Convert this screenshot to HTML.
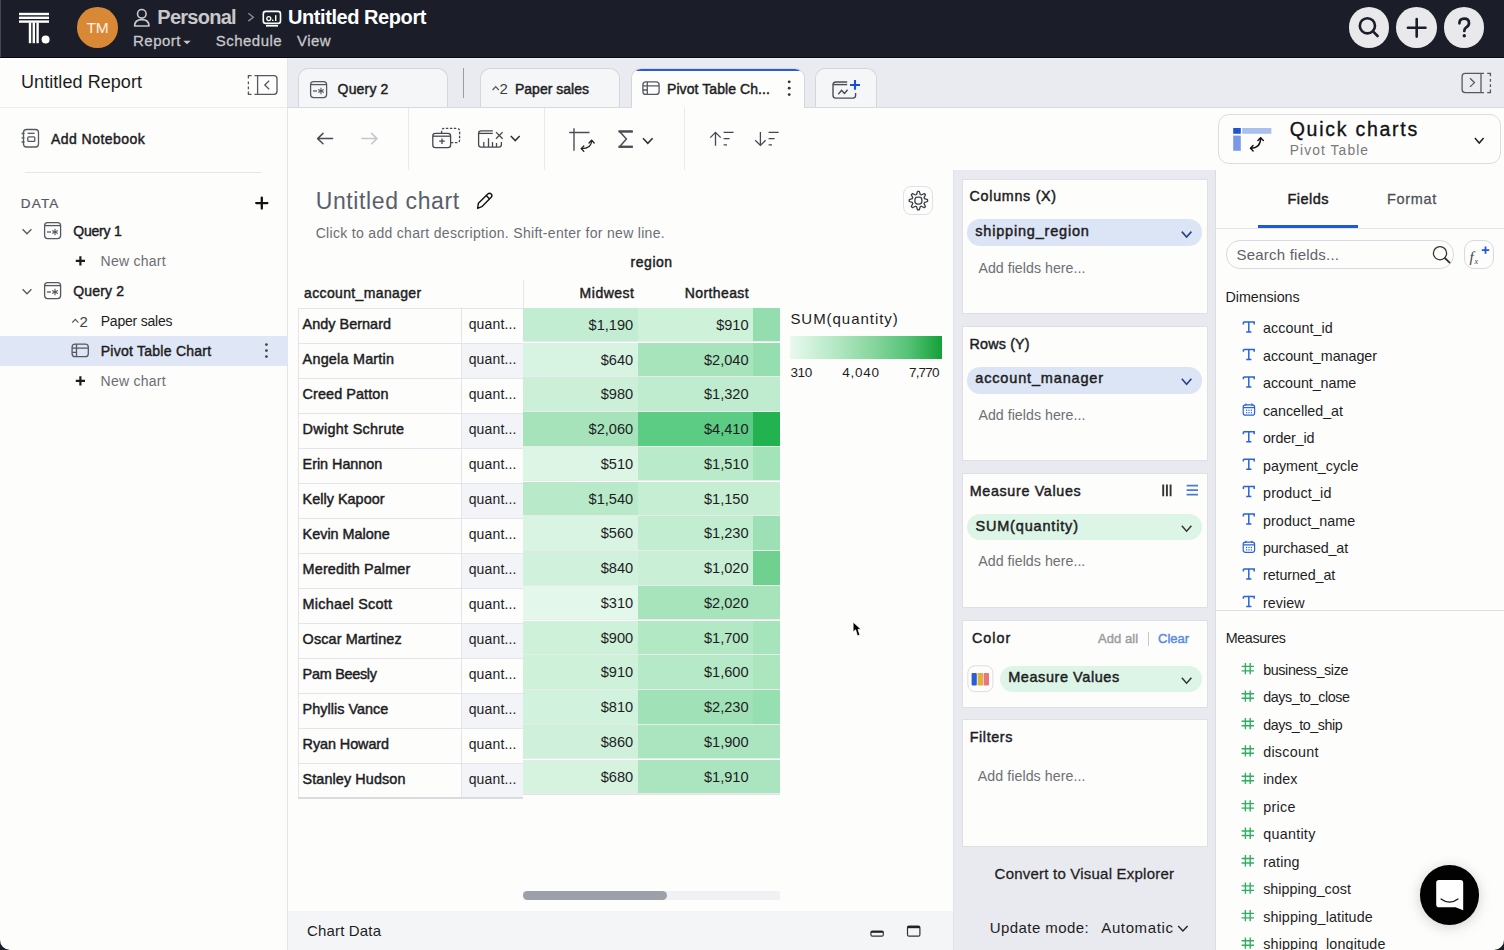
<!DOCTYPE html><html><head><meta charset="utf-8"><style>
*{box-sizing:border-box;margin:0;padding:0}
html,body{width:1504px;height:950px;overflow:hidden;background:#1b1e29}
body{font-family:"Liberation Sans",sans-serif;position:relative;color:#1d1d1f}
.a{position:absolute}
.t{position:absolute;white-space:nowrap;line-height:1}
svg{position:absolute;overflow:visible}
</style></head><body><div class="a" style="left:0;top:0;width:1504px;height:57px;background:#1b1e29"></div>
<svg style="left:0;top:0" width="60" height="57">
<g fill="#fff">
<rect x="19" y="12.8" width="30" height="2.4"/>
<rect x="19" y="16.6" width="30" height="2.4"/>
<rect x="19" y="20.4" width="30" height="2.4"/>
<rect x="28.8" y="22.5" width="2.4" height="20.7"/>
<rect x="32.6" y="22.5" width="2.4" height="20.7"/>
<rect x="36.4" y="22.5" width="2.4" height="20.7"/>
<circle cx="45.6" cy="39.4" r="4"/>
</g></svg>
<div class="a" style="left:77.3px;top:7.3px;width:40.6px;height:40.6px;border-radius:50%;background:#d98935"></div>
<div class="t" style="left:86.41px;top:20.38px;font-size:15.5px;font-weight:400;color:#fdf3e6;">TM</div>
<svg style="left:0;top:0" width="160" height="57"><g fill="none" stroke="#c9c9cb" stroke-width="1.6">
<circle cx="141.8" cy="13.8" r="4.3"/>
<path d="M134.6 26 Q134.6 19.6 141.8 19.6 Q149 19.6 149 26 Z" stroke-linejoin="round"/>
</g></svg>
<div class="t" style="left:157.30px;top:6.87px;font-size:20px;font-weight:700;color:#c9c9cb;letter-spacing:-0.740px;">Personal</div>
<svg style="left:0;top:0" width="300" height="57"><path d="M248.3 13.3 L253.3 17.2 L248.3 21.1" fill="none" stroke="#8a8c92" stroke-width="1.4"/>
<g fill="none" stroke="#fff" stroke-width="1.6"><rect x="263.3" y="11.4" width="17.2" height="12" rx="2.5"/></g>
<rect x="266" y="25" width="12" height="1.6" fill="#fff"/>
<circle cx="268.8" cy="18.6" r="2" fill="none" stroke="#fff" stroke-width="1.3"/>
<rect x="272" y="19.6" width="1.4" height="1.4" fill="#fff"/><rect x="275" y="15.2" width="1.4" height="5.8" fill="#fff"/>
</svg>
<div class="t" style="left:288.00px;top:6.87px;font-size:20px;font-weight:700;color:#ffffff;letter-spacing:-0.431px;">Untitled Report</div>
<div class="t" style="left:133.00px;top:32.60px;font-size:15px;font-weight:400;color:#c9c9cb;-webkit-text-stroke:0.27px #c9c9cb;letter-spacing:0.496px;">Report</div>
<svg style="left:0;top:0" width="200" height="57"><path d="M183.3 40.8 L190.7 40.8 L187 44.2 Z" fill="#c9c9cb"/></svg>
<div class="t" style="left:215.70px;top:32.60px;font-size:15px;font-weight:400;color:#c9c9cb;-webkit-text-stroke:0.27px #c9c9cb;letter-spacing:0.493px;">Schedule</div>
<div class="t" style="left:297.00px;top:32.60px;font-size:15px;font-weight:400;color:#c9c9cb;-webkit-text-stroke:0.27px #c9c9cb;letter-spacing:0.453px;">View</div>
<div class="a" style="left:1348.9px;top:7.3px;width:40.6px;height:40.6px;border-radius:50%;background:#e9e9eb"></div>
<div class="a" style="left:1396.4px;top:7.3px;width:40.6px;height:40.6px;border-radius:50%;background:#e9e9eb"></div>
<div class="a" style="left:1443.9px;top:7.3px;width:40.6px;height:40.6px;border-radius:50%;background:#e9e9eb"></div>
<svg style="left:0;top:0" width="1504" height="57"><g fill="none" stroke="#1b1e29" stroke-width="2.6" stroke-linecap="round">
<circle cx="1367.4" cy="25.8" r="7.6"/><path d="M1373 31.4 L1377.6 36"/>
<path d="M1416.7 19 V36.6 M1407.9 27.8 H1425.5"/>
</g>
<path d="M1459.4 23.3 Q1459.4 18.6 1464.2 18.6 Q1469 18.6 1469 23 Q1469 25.8 1466.2 27.4 Q1464.3 28.6 1464.3 31" fill="none" stroke="#1b1e29" stroke-width="2.7" stroke-linecap="round"/>
<circle cx="1464.3" cy="35.8" r="1.7" fill="#1b1e29"/>
</svg>
<div class="a" style="left:0;top:57px;width:288px;height:893px;background:#fdfdfc;border-right:1px solid #e4e5ea;border-bottom-left-radius:10px"></div>
<div class="t" style="left:21.00px;top:73.26px;font-size:18px;font-weight:400;color:#1d1d1f;letter-spacing:0.067px;">Untitled Report</div>
<svg style="left:0;top:0" width="288" height="200"><g fill="none" stroke="#55595f" stroke-width="1.3">
<path d="M254.5 75.6 H273.9 Q277 75.6 277 78.7 V91.3 Q277 94.4 273.9 94.4 H254.5"/><path d="M257.6 75.6 V94.4"/><path d="M251.6 75.6 H248.4 V78.6 M248.4 81.4 V84.2 M248.4 86.6 V89.2 M248.4 91.6 V94.4 H251.6"/><path d="M269.2 80.8 L264.8 85 L269.2 89.2"/>
</g>
<g fill="none" stroke="#55595f" stroke-width="1.3">
<rect x="23.5" y="129.5" width="15" height="17.5" rx="3"/>
<rect x="27.8" y="136.8" width="7" height="4.6" rx="1"/>
<path d="M27.6 133.3 H34.6"/>
<path d="M21.6 133.5 H24.5 M21.6 137.8 H24.5 M21.6 142 H24.5"/>
</g></svg>
<div class="a" style="left:0;top:107px;width:287px;height:1px;background:#ecedf1"></div>
<div class="t" style="left:51.00px;top:131.95px;font-size:14px;font-weight:400;color:#1d1d1f;-webkit-text-stroke:0.45px #1d1d1f;letter-spacing:0.452px;">Add Notebook</div>
<div class="a" style="left:25px;top:172px;width:237px;height:1px;background:#e4e6ee"></div>
<div class="t" style="left:20.80px;top:197.27px;font-size:13.5px;font-weight:400;color:#56595f;-webkit-text-stroke:0.24px #56595f;letter-spacing:1.167px;">DATA</div>
<svg style="left:0;top:0" width="288" height="400"><path d="M261.8 197.6 V208.6 M256.2 203.1 H267.4" stroke="#111" stroke-width="2.3" stroke-linecap="round"/></svg>
<div class="a" style="left:0;top:336px;width:287px;height:30px;background:#dfe7f6"></div>
<svg style="left:0;top:0" width="288" height="400"><path d="M22.6 229.2 L27.0 233.79999999999998 L31.400000000000002 229.2" fill="none" stroke="#55595f" stroke-width="1.3"/><path d="M22.6 289.2 L27.0 293.8 L31.400000000000002 289.2" fill="none" stroke="#55595f" stroke-width="1.3"/><g fill="none" stroke="#55595f" stroke-width="1.3"><rect x="44.6" y="222.6" width="16" height="16" rx="3"/>
<path d="M44.6 225.6 H60.6"/><path d="M47 232 H51"/>
<path d="M55 228.8 V235.2 M52.2 230.4 L57.8 233.6 M52.2 233.6 L57.8 230.4" stroke-width="1.1"/></g><g fill="none" stroke="#55595f" stroke-width="1.3"><rect x="44.6" y="282.6" width="16" height="16" rx="3"/>
<path d="M44.6 285.6 H60.6"/><path d="M47 292 H51"/>
<path d="M55 288.8 V295.2 M52.2 290.4 L57.8 293.6 M52.2 293.6 L57.8 290.4" stroke-width="1.1"/></g><path d="M80.4 256.3 V265.4 M75.8 260.9 H85" stroke="#1d1d1f" stroke-width="2.2"/><path d="M80.4 376.3 V385.4 M75.8 380.9 H85" stroke="#1d1d1f" stroke-width="2.2"/></svg>
<div class="t" style="left:73.20px;top:224.25px;font-size:14px;font-weight:400;color:#1d1d1f;-webkit-text-stroke:0.45px #1d1d1f;letter-spacing:-0.200px;">Query 1</div>
<div class="t" style="left:100.60px;top:253.95px;font-size:14px;font-weight:400;color:#6b6e75;letter-spacing:0.247px;">New chart</div>
<div class="t" style="left:73.20px;top:284.25px;font-size:14px;font-weight:400;color:#1d1d1f;-webkit-text-stroke:0.45px #1d1d1f;letter-spacing:0.167px;">Query 2</div>
<svg style="left:0;top:0" width="100" height="400"><path d="M72.2 322.6 L75.3 319.3 L78.4 322.6" fill="none" stroke="#555" stroke-width="1.2"/></svg>
<div class="t" style="left:79.40px;top:313.70px;font-size:15px;font-weight:400;color:#3d4046;">2</div>
<div class="t" style="left:100.70px;top:313.85px;font-size:14px;font-weight:400;color:#1d1d1f;letter-spacing:-0.213px;">Paper sales</div>
<svg style="left:0;top:0" width="288" height="400"><g fill="none" stroke="#55595f" stroke-width="1.3"><rect x="72.1" y="344.1" width="16.2" height="12.6" rx="3"/>
<path d="M72.1 348.1 H88.3 M76.5 344.1 V356.7 M72.1 352.3 H76.5"/></g><circle cx="266.4" cy="344.6" r="1.4" fill="#444"/><circle cx="266.4" cy="350.6" r="1.4" fill="#444"/><circle cx="266.4" cy="356.6" r="1.4" fill="#444"/></svg>
<div class="t" style="left:100.70px;top:343.85px;font-size:14px;font-weight:400;color:#1d1d1f;-webkit-text-stroke:0.45px #1d1d1f;letter-spacing:0.256px;">Pivot Table Chart</div>
<div class="t" style="left:100.60px;top:373.95px;font-size:14px;font-weight:400;color:#6b6e75;letter-spacing:0.247px;">New chart</div>
<div class="a" style="left:288px;top:57px;width:1216px;height:50px;background:#e9ebf0"></div>
<div class="a" style="left:288px;top:58px;width:1216px;height:1.3px;background:#f1f2f6"></div>
<div class="a" style="left:298px;top:68px;width:149.5px;height:40px;background:#f5f6f8;border:1px solid #d5d6dc;border-bottom:none;border-radius:10px 10px 0 0"></div>
<div class="a" style="left:479.5px;top:68px;width:140px;height:40px;background:#f5f6f8;border:1px solid #d5d6dc;border-bottom:none;border-radius:10px 10px 0 0"></div>
<div class="a" style="left:815px;top:68px;width:61.5px;height:40px;background:#f5f6f8;border:1px solid #d5d6dc;border-bottom:none;border-radius:10px 10px 0 0"></div>
<div class="a" style="left:288px;top:107px;width:1216px;height:1px;background:#d9dadf"></div>
<div class="a" style="left:631px;top:68px;width:174px;height:41px;background:#fdfdfc;border:1px solid #d5d6dc;border-bottom:none;border-radius:10px 10px 0 0;overflow:hidden"><div style="position:absolute;left:4px;right:4px;top:-1px;height:2.5px;background:#2d5bd3;border-radius:2px"></div></div>
<div class="a" style="left:462.5px;top:68px;width:1.4px;height:30px;background:#9a9ca3"></div>
<svg style="left:0;top:0" width="1504" height="120"><g fill="none" stroke="#55595f" stroke-width="1.3"><rect x="310.6" y="81.6" width="16" height="16" rx="3"/>
<path d="M310.6 84.6 H326.6"/><path d="M313 91 H317"/>
<path d="M321 87.8 V94.2 M318.2 89.4 L323.8 92.6 M318.2 92.6 L323.8 89.4" stroke-width="1.1"/></g><g fill="none" stroke="#55595f" stroke-width="1.3"><rect x="642.9" y="81.8" width="16.2" height="12.6" rx="3"/>
<path d="M642.9 85.8 H659.0999999999999 M647.3 81.8 V94.4 M642.9 90.0 H647.3"/></g><circle cx="789.2" cy="81.8" r="1.4" fill="#333"/><circle cx="789.2" cy="88.2" r="1.4" fill="#333"/><circle cx="789.2" cy="94.6" r="1.4" fill="#333"/><g fill="none" stroke="#4a4d53" stroke-width="1.4"><path d="M847.2 82 H836 Q833 82 833 85 V95.2 Q833 98.1 836 98.1 H852.7 Q855.6 98.1 855.6 95.2 V92.9"/><path d="M833.2 84.6 H847.2"/><path d="M838.3 94.3 L841.6 90.4 L844.5 93.4 L847.6 89.8"/></g><path d="M855 80 V89.8 M850 85 H860" stroke="#1b4fd9" stroke-width="2.1"/><g fill="none" stroke="#55595f" stroke-width="1.3"><path d="M1484 73.3 H1465.2 Q1462.1 73.3 1462.1 76.4 V89.6 Q1462.1 92.7 1465.2 92.7 H1484"/><path d="M1481 73.3 V92.7"/><path d="M1487.2 73.3 H1490.4 V76.3 M1490.4 79 V81.8 M1490.4 84.3 V86.9 M1490.4 89.6 V92.7 H1487.2"/><path d="M1470 78.3 L1474.4 82.6 L1470 86.9"/></g></svg>
<div class="t" style="left:337.60px;top:82.15px;font-size:14px;font-weight:400;color:#1d1d1f;-webkit-text-stroke:0.45px #1d1d1f;letter-spacing:0.167px;">Query 2</div>
<svg style="left:0;top:0" width="600" height="120"><path d="M492.6 90 L495.7 86.7 L498.8 90" fill="none" stroke="#555" stroke-width="1.2"/></svg>
<div class="t" style="left:499.60px;top:81.30px;font-size:15px;font-weight:400;color:#3d4046;">2</div>
<div class="t" style="left:515.00px;top:82.15px;font-size:14px;font-weight:400;color:#1d1d1f;-webkit-text-stroke:0.45px #1d1d1f;">Paper sales</div>
<div class="t" style="left:667.00px;top:81.75px;font-size:14px;font-weight:400;color:#1d1d1f;-webkit-text-stroke:0.45px #1d1d1f;letter-spacing:0.079px;">Pivot Table Ch...</div>
<div class="a" style="left:288px;top:108px;width:1216px;height:62px;background:#fdfdfc"></div>
<div class="a" style="left:288px;top:169.5px;width:1216px;height:1px;background:#e3e4e9"></div>
<div class="a" style="left:408.2px;top:108px;width:1px;height:62px;background:#e8e9ee"></div>
<div class="a" style="left:543.5px;top:108px;width:1px;height:62px;background:#e8e9ee"></div>
<div class="a" style="left:684px;top:108px;width:1px;height:62px;background:#e8e9ee"></div>
<svg style="left:0;top:0" width="1504" height="200"><g fill="none" stroke="#4a4d53" stroke-width="1.5" stroke-linecap="round" stroke-linejoin="round"><path d="M317.6 138.6 H332.6 M323 133.4 L317.6 138.6 L323 143.8"/></g><g fill="none" stroke="#c4c6cb" stroke-width="1.5" stroke-linecap="round" stroke-linejoin="round"><path d="M362 138.6 H377 M371.6 133.4 L377 138.6 L371.6 143.8"/></g><g fill="none" stroke="#45484e" stroke-width="1.3"><path d="M441.6 133.2 V131 Q441.6 128.4 444.2 128.4 H457 Q459.6 128.4 459.6 131 V140 Q459.6 142.6 457 142.6 H450.8" stroke-dasharray="2.4 1.6"/><rect x="432.8" y="133.3" width="17.8" height="14.3" rx="2.6"/><path d="M433 136.2 H450.6"/><path d="M442 138.4 V143.9 M439.2 141.1 H444.8"/></g><g fill="none" stroke="#45484e" stroke-width="1.3"><path d="M492.8 130.8 H481.2 Q478.6 130.8 478.6 133.4 V144.6 Q478.6 147.2 481.2 147.2 H498.8 Q501.4 147.2 501.4 144.6 V142"/><path d="M478.8 133.4 H492.8"/><path d="M483.8 147 V142 M488.5 147 V138.2 M492.5 147 V142 M496.5 147 V143"/><path d="M496 132.1 L502.6 138.7 M502.6 132.1 L496 138.7"/></g><path d="M510.8 136 L515.25 140.6 L519.7 136" fill="none" stroke="#333" stroke-width="1.5"/><g fill="none" stroke="#4a4d53" stroke-width="1.4"><path d="M569.2 132.5 H589.5 M574 128.2 V150.7"/></g><g fill="none" stroke="#222" stroke-width="1.3" stroke-linecap="round" stroke-linejoin="round"><path d="M581.3 148.6 Q591.6 148.6 591.6 140.4"/><path d="M583.8 146 L581.2 148.6 L583.8 151.2"/><path d="M589 143 L591.6 140.2 L594.2 143"/></g><path d="M632.6 131.6 H619.6 L626.4 139.1 L619.6 146.8 H632.6" fill="none" stroke="#4a4d53" stroke-width="1.5" stroke-linejoin="miter"/><rect x="618.6" y="130.3" width="14.2" height="2.3" fill="#4a4d53"/><rect x="618.6" y="145.6" width="14.2" height="2.3" fill="#4a4d53"/><path d="M643 138.2 L647.8 143.39999999999998 L652.6 138.2" fill="none" stroke="#333" stroke-width="1.6"/><g fill="none" stroke="#45484e" stroke-width="1.3">
<path d="M715.5 145.8 V132.4 M710.3 137.6 L715.5 132.4 L720.7 137.6"/>
<path d="M723.6 132.4 H733.6 M723.6 138.6 H729.6 M723.6 144.8 H727"/>
<path d="M760.4 132 V145.4 M755.2 140.2 L760.4 145.4 L765.6 140.2"/>
<path d="M768.6 132.4 H778.6 M768.6 138.6 H774.6 M768.6 144.8 H772"/>
</g></svg>
<div class="a" style="left:1218.3px;top:114.3px;width:282.4px;height:49.4px;border:1px solid #dcdde2;border-radius:11px;background:#fdfdfc"></div>
<svg style="left:0;top:0" width="1504" height="200"><rect x="1233.2" y="128" width="7.6" height="5.8" fill="#1e55d8"/><rect x="1242.2" y="128" width="29.2" height="5.8" fill="#a9c0ee"/><rect x="1233.2" y="135.6" width="7.6" height="15.2" fill="#7a9ae8"/><g fill="none" stroke="#111" stroke-width="1.4" stroke-linecap="round" stroke-linejoin="round"><path d="M1250.6 148.2 Q1260.6 148.2 1260.6 138"/><path d="M1253.1 145.5 L1250.5 148.2 L1253.1 150.9"/><path d="M1257.9 140.6 L1260.6 137.8 L1263.3 140.6"/></g><path d="M1474.9 137.9 L1479.25 143.1 L1483.6000000000001 137.9" fill="none" stroke="#222" stroke-width="1.5"/></svg>
<div class="t" style="left:1289.70px;top:120.19px;font-size:19.5px;font-weight:400;color:#111216;-webkit-text-stroke:0.35px #111216;letter-spacing:1.740px;">Quick charts</div>
<div class="t" style="left:1289.70px;top:143.62px;font-size:13.8px;font-weight:400;color:#77797e;letter-spacing:1.111px;">Pivot Table</div>
<div class="a" style="left:288px;top:170px;width:665px;height:780px;background:#fdfdfc"></div>
<div class="t" style="left:315.70px;top:189.53px;font-size:23px;font-weight:400;color:#59606c;letter-spacing:0.607px;">Untitled chart</div>
<div class="a" style="left:903.3px;top:185.9px;width:29.6px;height:29.6px;border:1px solid #dfe1e7;border-radius:8px"></div>
<svg style="left:0;top:0" width="1504" height="300"><g fill="none" stroke="#111" stroke-width="1.4" stroke-linejoin="round"><path d="M477.6 208.3 L478.4 203.3 L487.8 193.9 Q489.5 192.4 491.2 193.9 Q492.7 195.6 491.2 197.3 L481.8 206.7 Z"/><path d="M486.2 195.5 L489.6 198.9"/></g><path d="M917.50 191.44 L919.30 191.44 L920.26 194.48 L921.42 194.96 L924.24 193.49 L925.51 194.76 L924.04 197.58 L924.52 198.74 L927.56 199.70 L927.56 201.50 L924.52 202.46 L924.04 203.62 L925.51 206.44 L924.24 207.71 L921.42 206.24 L920.26 206.72 L919.30 209.76 L917.50 209.76 L916.54 206.72 L915.38 206.24 L912.56 207.71 L911.29 206.44 L912.76 203.62 L912.28 202.46 L909.24 201.50 L909.24 199.70 L912.28 198.74 L912.76 197.58 L911.29 194.76 L912.56 193.49 L915.38 194.96 L916.54 194.48Z" fill="none" stroke="#3c4046" stroke-width="1.3" stroke-linejoin="round"/><rect x="914.9" y="197.1" width="7" height="7" rx="2.8" fill="none" stroke="#3c4046" stroke-width="1.3"/></svg>
<div class="t" style="left:315.70px;top:226.15px;font-size:14px;font-weight:400;color:#6b6e74;letter-spacing:0.313px;">Click to add chart description. Shift-enter for new line.</div>
<div class="t" style="left:630.60px;top:254.95px;font-size:14px;font-weight:400;color:#1d1d1f;-webkit-text-stroke:0.45px #1d1d1f;letter-spacing:0.517px;">region</div>
<div class="t" style="left:304.10px;top:286.45px;font-size:14px;font-weight:400;color:#1d1d1f;-webkit-text-stroke:0.45px #1d1d1f;letter-spacing:0.352px;">account_manager</div>
<div class="t" style="left:579.60px;top:286.35px;font-size:14px;font-weight:400;color:#1d1d1f;-webkit-text-stroke:0.45px #1d1d1f;letter-spacing:0.509px;">Midwest</div>
<div class="t" style="left:684.80px;top:286.35px;font-size:14px;font-weight:400;color:#1d1d1f;-webkit-text-stroke:0.45px #1d1d1f;letter-spacing:0.388px;">Northeast</div>
<div class="a" style="left:522.5px;top:280px;width:1px;height:28px;background:#e6e7ec"></div>
<div class="a" style="left:298px;top:307.5px;width:163px;height:35px;border-left:1px solid #e4e5ea;border-top:1px solid #e4e5ea;background:#fdfdfc"></div>
<div class="a" style="left:460.5px;top:307.5px;width:62.5px;height:35px;border-left:1px solid #e4e5ea;border-top:1px solid #e4e5ea;background:#fdfdfc"></div>
<div class="a" style="left:523px;top:307.80px;width:115px;height:33.5px;background:#c3edd2"></div>
<div class="a" style="left:638px;top:307.80px;width:115px;height:33.5px;background:#cdf1d9"></div>
<div class="a" style="left:753px;top:307.80px;width:27px;height:33.5px;background:#93ddae"></div>
<div class="a" style="left:523px;top:341.30px;width:257px;height:1.2px;background:#e8eaeb"></div>
<div class="t" style="left:302.60px;top:316.71px;font-size:14.4px;font-weight:400;color:#1d1d1f;-webkit-text-stroke:0.46px #1d1d1f;letter-spacing:0.037px;">Andy Bernard</div>
<div class="t" style="left:468.70px;top:317.05px;font-size:14px;font-weight:400;color:#1d1d1f;letter-spacing:0.142px;">quant...</div>
<div class="t" style="left:588.56px;top:317.94px;font-size:14.6px;font-weight:400;color:#1d1d1f;">$1,190</div>
<div class="t" style="left:716.13px;top:317.94px;font-size:14.6px;font-weight:400;color:#1d1d1f;">$910</div>
<div class="a" style="left:298px;top:342.5px;width:163px;height:35px;border-left:1px solid #e4e5ea;border-top:1px solid #e4e5ea;background:#fdfdfc"></div>
<div class="a" style="left:460.5px;top:342.5px;width:62.5px;height:35px;border-left:1px solid #e4e5ea;border-top:1px solid #e4e5ea;background:#f3f4f7"></div>
<div class="a" style="left:523px;top:342.55px;width:115px;height:33.5px;background:#d7f3e1"></div>
<div class="a" style="left:638px;top:342.55px;width:115px;height:33.5px;background:#a7e4bb"></div>
<div class="a" style="left:753px;top:342.55px;width:27px;height:33.5px;background:#94deb0"></div>
<div class="a" style="left:523px;top:376.05px;width:257px;height:1.2px;background:#e8eaeb"></div>
<div class="t" style="left:302.60px;top:351.71px;font-size:14.4px;font-weight:400;color:#1d1d1f;-webkit-text-stroke:0.46px #1d1d1f;letter-spacing:0.218px;">Angela Martin</div>
<div class="t" style="left:468.70px;top:352.05px;font-size:14px;font-weight:400;color:#1d1d1f;letter-spacing:0.142px;">quant...</div>
<div class="t" style="left:600.73px;top:352.69px;font-size:14.6px;font-weight:400;color:#1d1d1f;">$640</div>
<div class="t" style="left:703.96px;top:352.69px;font-size:14.6px;font-weight:400;color:#1d1d1f;">$2,040</div>
<div class="a" style="left:298px;top:377.5px;width:163px;height:35px;border-left:1px solid #e4e5ea;border-top:1px solid #e4e5ea;background:#fdfdfc"></div>
<div class="a" style="left:460.5px;top:377.5px;width:62.5px;height:35px;border-left:1px solid #e4e5ea;border-top:1px solid #e4e5ea;background:#fdfdfc"></div>
<div class="a" style="left:523px;top:377.30px;width:115px;height:33.5px;background:#cbf0d7"></div>
<div class="a" style="left:638px;top:377.30px;width:115px;height:33.5px;background:#bfecce"></div>
<div class="a" style="left:753px;top:377.30px;width:27px;height:33.5px;background:#bfecce"></div>
<div class="a" style="left:523px;top:410.80px;width:257px;height:1.2px;background:#e8eaeb"></div>
<div class="t" style="left:302.60px;top:386.71px;font-size:14.4px;font-weight:400;color:#1d1d1f;-webkit-text-stroke:0.46px #1d1d1f;letter-spacing:0.091px;">Creed Patton</div>
<div class="t" style="left:468.70px;top:387.05px;font-size:14px;font-weight:400;color:#1d1d1f;letter-spacing:0.142px;">quant...</div>
<div class="t" style="left:600.73px;top:387.44px;font-size:14.6px;font-weight:400;color:#1d1d1f;">$980</div>
<div class="t" style="left:703.96px;top:387.44px;font-size:14.6px;font-weight:400;color:#1d1d1f;">$1,320</div>
<div class="a" style="left:298px;top:412.5px;width:163px;height:35px;border-left:1px solid #e4e5ea;border-top:1px solid #e4e5ea;background:#fdfdfc"></div>
<div class="a" style="left:460.5px;top:412.5px;width:62.5px;height:35px;border-left:1px solid #e4e5ea;border-top:1px solid #e4e5ea;background:#f3f4f7"></div>
<div class="a" style="left:523px;top:412.05px;width:115px;height:33.5px;background:#a6e3bb"></div>
<div class="a" style="left:638px;top:412.05px;width:115px;height:33.5px;background:#5ccb84"></div>
<div class="a" style="left:753px;top:412.05px;width:27px;height:33.5px;background:#22b24f"></div>
<div class="a" style="left:523px;top:445.55px;width:257px;height:1.2px;background:#e8eaeb"></div>
<div class="t" style="left:302.60px;top:421.71px;font-size:14.4px;font-weight:400;color:#1d1d1f;-webkit-text-stroke:0.46px #1d1d1f;letter-spacing:0.294px;">Dwight Schrute</div>
<div class="t" style="left:468.70px;top:422.05px;font-size:14px;font-weight:400;color:#1d1d1f;letter-spacing:0.142px;">quant...</div>
<div class="t" style="left:588.56px;top:422.19px;font-size:14.6px;font-weight:400;color:#1d1d1f;">$2,060</div>
<div class="t" style="left:703.96px;top:422.19px;font-size:14.6px;font-weight:400;color:#1d1d1f;">$4,410</div>
<div class="a" style="left:298px;top:447.5px;width:163px;height:35px;border-left:1px solid #e4e5ea;border-top:1px solid #e4e5ea;background:#fdfdfc"></div>
<div class="a" style="left:460.5px;top:447.5px;width:62.5px;height:35px;border-left:1px solid #e4e5ea;border-top:1px solid #e4e5ea;background:#fdfdfc"></div>
<div class="a" style="left:523px;top:446.80px;width:115px;height:33.5px;background:#dcf5e4"></div>
<div class="a" style="left:638px;top:446.80px;width:115px;height:33.5px;background:#b9eac9"></div>
<div class="a" style="left:753px;top:446.80px;width:27px;height:33.5px;background:#a2e3ba"></div>
<div class="a" style="left:523px;top:480.30px;width:257px;height:1.2px;background:#e8eaeb"></div>
<div class="t" style="left:302.60px;top:456.71px;font-size:14.4px;font-weight:400;color:#1d1d1f;-webkit-text-stroke:0.46px #1d1d1f;letter-spacing:-0.030px;">Erin Hannon</div>
<div class="t" style="left:468.70px;top:457.05px;font-size:14px;font-weight:400;color:#1d1d1f;letter-spacing:0.142px;">quant...</div>
<div class="t" style="left:600.73px;top:456.94px;font-size:14.6px;font-weight:400;color:#1d1d1f;">$510</div>
<div class="t" style="left:703.96px;top:456.94px;font-size:14.6px;font-weight:400;color:#1d1d1f;">$1,510</div>
<div class="a" style="left:298px;top:482.5px;width:163px;height:35px;border-left:1px solid #e4e5ea;border-top:1px solid #e4e5ea;background:#fdfdfc"></div>
<div class="a" style="left:460.5px;top:482.5px;width:62.5px;height:35px;border-left:1px solid #e4e5ea;border-top:1px solid #e4e5ea;background:#f3f4f7"></div>
<div class="a" style="left:523px;top:481.55px;width:115px;height:33.5px;background:#b8e9c8"></div>
<div class="a" style="left:638px;top:481.55px;width:115px;height:33.5px;background:#c5eed3"></div>
<div class="a" style="left:753px;top:481.55px;width:27px;height:33.5px;background:#c5eed3"></div>
<div class="a" style="left:523px;top:515.05px;width:257px;height:1.2px;background:#e8eaeb"></div>
<div class="t" style="left:302.60px;top:491.71px;font-size:14.4px;font-weight:400;color:#1d1d1f;-webkit-text-stroke:0.46px #1d1d1f;letter-spacing:0.028px;">Kelly Kapoor</div>
<div class="t" style="left:468.70px;top:492.05px;font-size:14px;font-weight:400;color:#1d1d1f;letter-spacing:0.142px;">quant...</div>
<div class="t" style="left:588.56px;top:491.69px;font-size:14.6px;font-weight:400;color:#1d1d1f;">$1,540</div>
<div class="t" style="left:703.96px;top:491.69px;font-size:14.6px;font-weight:400;color:#1d1d1f;">$1,150</div>
<div class="a" style="left:298px;top:517.5px;width:163px;height:35px;border-left:1px solid #e4e5ea;border-top:1px solid #e4e5ea;background:#fdfdfc"></div>
<div class="a" style="left:460.5px;top:517.5px;width:62.5px;height:35px;border-left:1px solid #e4e5ea;border-top:1px solid #e4e5ea;background:#fdfdfc"></div>
<div class="a" style="left:523px;top:516.30px;width:115px;height:33.5px;background:#daf4e3"></div>
<div class="a" style="left:638px;top:516.30px;width:115px;height:33.5px;background:#c2edd0"></div>
<div class="a" style="left:753px;top:516.30px;width:27px;height:33.5px;background:#9ee0b5"></div>
<div class="a" style="left:523px;top:549.80px;width:257px;height:1.2px;background:#e8eaeb"></div>
<div class="t" style="left:302.60px;top:526.71px;font-size:14.4px;font-weight:400;color:#1d1d1f;-webkit-text-stroke:0.46px #1d1d1f;">Kevin Malone</div>
<div class="t" style="left:468.70px;top:527.05px;font-size:14px;font-weight:400;color:#1d1d1f;letter-spacing:0.142px;">quant...</div>
<div class="t" style="left:600.73px;top:526.44px;font-size:14.6px;font-weight:400;color:#1d1d1f;">$560</div>
<div class="t" style="left:703.96px;top:526.44px;font-size:14.6px;font-weight:400;color:#1d1d1f;">$1,230</div>
<div class="a" style="left:298px;top:552.5px;width:163px;height:35px;border-left:1px solid #e4e5ea;border-top:1px solid #e4e5ea;background:#fdfdfc"></div>
<div class="a" style="left:460.5px;top:552.5px;width:62.5px;height:35px;border-left:1px solid #e4e5ea;border-top:1px solid #e4e5ea;background:#f3f4f7"></div>
<div class="a" style="left:523px;top:551.05px;width:115px;height:33.5px;background:#d0f1db"></div>
<div class="a" style="left:638px;top:551.05px;width:115px;height:33.5px;background:#c9efd6"></div>
<div class="a" style="left:753px;top:551.05px;width:27px;height:33.5px;background:#6fd090"></div>
<div class="a" style="left:523px;top:584.55px;width:257px;height:1.2px;background:#e8eaeb"></div>
<div class="t" style="left:302.60px;top:561.71px;font-size:14.4px;font-weight:400;color:#1d1d1f;-webkit-text-stroke:0.46px #1d1d1f;letter-spacing:0.152px;">Meredith Palmer</div>
<div class="t" style="left:468.70px;top:562.05px;font-size:14px;font-weight:400;color:#1d1d1f;letter-spacing:0.142px;">quant...</div>
<div class="t" style="left:600.73px;top:561.19px;font-size:14.6px;font-weight:400;color:#1d1d1f;">$840</div>
<div class="t" style="left:703.96px;top:561.19px;font-size:14.6px;font-weight:400;color:#1d1d1f;">$1,020</div>
<div class="a" style="left:298px;top:587.5px;width:163px;height:35px;border-left:1px solid #e4e5ea;border-top:1px solid #e4e5ea;background:#fdfdfc"></div>
<div class="a" style="left:460.5px;top:587.5px;width:62.5px;height:35px;border-left:1px solid #e4e5ea;border-top:1px solid #e4e5ea;background:#fdfdfc"></div>
<div class="a" style="left:523px;top:585.80px;width:115px;height:33.5px;background:#e3f7ea"></div>
<div class="a" style="left:638px;top:585.80px;width:115px;height:33.5px;background:#a7e4bc"></div>
<div class="a" style="left:753px;top:585.80px;width:27px;height:33.5px;background:#a7e4bc"></div>
<div class="a" style="left:523px;top:619.30px;width:257px;height:1.2px;background:#e8eaeb"></div>
<div class="t" style="left:302.60px;top:596.71px;font-size:14.4px;font-weight:400;color:#1d1d1f;-webkit-text-stroke:0.46px #1d1d1f;letter-spacing:0.260px;">Michael Scott</div>
<div class="t" style="left:468.70px;top:597.05px;font-size:14px;font-weight:400;color:#1d1d1f;letter-spacing:0.142px;">quant...</div>
<div class="t" style="left:600.73px;top:595.94px;font-size:14.6px;font-weight:400;color:#1d1d1f;">$310</div>
<div class="t" style="left:703.96px;top:595.94px;font-size:14.6px;font-weight:400;color:#1d1d1f;">$2,020</div>
<div class="a" style="left:298px;top:622.5px;width:163px;height:35px;border-left:1px solid #e4e5ea;border-top:1px solid #e4e5ea;background:#fdfdfc"></div>
<div class="a" style="left:460.5px;top:622.5px;width:62.5px;height:35px;border-left:1px solid #e4e5ea;border-top:1px solid #e4e5ea;background:#f3f4f7"></div>
<div class="a" style="left:523px;top:620.55px;width:115px;height:33.5px;background:#cef1d9"></div>
<div class="a" style="left:638px;top:620.55px;width:115px;height:33.5px;background:#b2e8c4"></div>
<div class="a" style="left:753px;top:620.55px;width:27px;height:33.5px;background:#a6e4bb"></div>
<div class="a" style="left:523px;top:654.05px;width:257px;height:1.2px;background:#e8eaeb"></div>
<div class="t" style="left:302.60px;top:631.71px;font-size:14.4px;font-weight:400;color:#1d1d1f;-webkit-text-stroke:0.46px #1d1d1f;letter-spacing:0.111px;">Oscar Martinez</div>
<div class="t" style="left:468.70px;top:632.05px;font-size:14px;font-weight:400;color:#1d1d1f;letter-spacing:0.142px;">quant...</div>
<div class="t" style="left:600.73px;top:630.69px;font-size:14.6px;font-weight:400;color:#1d1d1f;">$900</div>
<div class="t" style="left:703.96px;top:630.69px;font-size:14.6px;font-weight:400;color:#1d1d1f;">$1,700</div>
<div class="a" style="left:298px;top:657.5px;width:163px;height:35px;border-left:1px solid #e4e5ea;border-top:1px solid #e4e5ea;background:#fdfdfc"></div>
<div class="a" style="left:460.5px;top:657.5px;width:62.5px;height:35px;border-left:1px solid #e4e5ea;border-top:1px solid #e4e5ea;background:#fdfdfc"></div>
<div class="a" style="left:523px;top:655.30px;width:115px;height:33.5px;background:#cdf1d9"></div>
<div class="a" style="left:638px;top:655.30px;width:115px;height:33.5px;background:#b6e9c7"></div>
<div class="a" style="left:753px;top:655.30px;width:27px;height:33.5px;background:#abe6bf"></div>
<div class="a" style="left:523px;top:688.80px;width:257px;height:1.2px;background:#e8eaeb"></div>
<div class="t" style="left:302.60px;top:666.71px;font-size:14.4px;font-weight:400;color:#1d1d1f;-webkit-text-stroke:0.46px #1d1d1f;letter-spacing:-0.264px;">Pam Beesly</div>
<div class="t" style="left:468.70px;top:667.05px;font-size:14px;font-weight:400;color:#1d1d1f;letter-spacing:0.142px;">quant...</div>
<div class="t" style="left:600.73px;top:665.44px;font-size:14.6px;font-weight:400;color:#1d1d1f;">$910</div>
<div class="t" style="left:703.96px;top:665.44px;font-size:14.6px;font-weight:400;color:#1d1d1f;">$1,600</div>
<div class="a" style="left:298px;top:692.5px;width:163px;height:35px;border-left:1px solid #e4e5ea;border-top:1px solid #e4e5ea;background:#fdfdfc"></div>
<div class="a" style="left:460.5px;top:692.5px;width:62.5px;height:35px;border-left:1px solid #e4e5ea;border-top:1px solid #e4e5ea;background:#f3f4f7"></div>
<div class="a" style="left:523px;top:690.05px;width:115px;height:33.5px;background:#d1f2dc"></div>
<div class="a" style="left:638px;top:690.05px;width:115px;height:33.5px;background:#a0e1b7"></div>
<div class="a" style="left:753px;top:690.05px;width:27px;height:33.5px;background:#96dfb1"></div>
<div class="a" style="left:523px;top:723.55px;width:257px;height:1.2px;background:#e8eaeb"></div>
<div class="t" style="left:302.60px;top:701.71px;font-size:14.4px;font-weight:400;color:#1d1d1f;-webkit-text-stroke:0.46px #1d1d1f;letter-spacing:0.032px;">Phyllis Vance</div>
<div class="t" style="left:468.70px;top:702.05px;font-size:14px;font-weight:400;color:#1d1d1f;letter-spacing:0.142px;">quant...</div>
<div class="t" style="left:600.73px;top:700.19px;font-size:14.6px;font-weight:400;color:#1d1d1f;">$810</div>
<div class="t" style="left:703.96px;top:700.19px;font-size:14.6px;font-weight:400;color:#1d1d1f;">$2,230</div>
<div class="a" style="left:298px;top:727.5px;width:163px;height:35px;border-left:1px solid #e4e5ea;border-top:1px solid #e4e5ea;background:#fdfdfc"></div>
<div class="a" style="left:460.5px;top:727.5px;width:62.5px;height:35px;border-left:1px solid #e4e5ea;border-top:1px solid #e4e5ea;background:#fdfdfc"></div>
<div class="a" style="left:523px;top:724.80px;width:115px;height:33.5px;background:#cff1db"></div>
<div class="a" style="left:638px;top:724.80px;width:115px;height:33.5px;background:#abe5bf"></div>
<div class="a" style="left:753px;top:724.80px;width:27px;height:33.5px;background:#abe5bf"></div>
<div class="a" style="left:523px;top:758.30px;width:257px;height:1.2px;background:#e8eaeb"></div>
<div class="t" style="left:302.60px;top:736.71px;font-size:14.4px;font-weight:400;color:#1d1d1f;-webkit-text-stroke:0.46px #1d1d1f;letter-spacing:-0.068px;">Ryan Howard</div>
<div class="t" style="left:468.70px;top:737.05px;font-size:14px;font-weight:400;color:#1d1d1f;letter-spacing:0.142px;">quant...</div>
<div class="t" style="left:600.73px;top:734.94px;font-size:14.6px;font-weight:400;color:#1d1d1f;">$860</div>
<div class="t" style="left:703.96px;top:734.94px;font-size:14.6px;font-weight:400;color:#1d1d1f;">$1,900</div>
<div class="a" style="left:298px;top:762.5px;width:163px;height:35px;border-left:1px solid #e4e5ea;border-top:1px solid #e4e5ea;background:#fdfdfc"></div>
<div class="a" style="left:460.5px;top:762.5px;width:62.5px;height:35px;border-left:1px solid #e4e5ea;border-top:1px solid #e4e5ea;background:#f3f4f7"></div>
<div class="a" style="left:523px;top:759.55px;width:115px;height:35.0px;background:#d6f3e0"></div>
<div class="a" style="left:638px;top:759.55px;width:115px;height:35.0px;background:#abe5bf"></div>
<div class="a" style="left:753px;top:759.55px;width:27px;height:35.0px;background:#abe5bf"></div>
<div class="a" style="left:523px;top:793.05px;width:257px;height:1.2px;background:#e8eaeb"></div>
<div class="t" style="left:302.60px;top:771.71px;font-size:14.4px;font-weight:400;color:#1d1d1f;-webkit-text-stroke:0.46px #1d1d1f;letter-spacing:0.092px;">Stanley Hudson</div>
<div class="t" style="left:468.70px;top:772.05px;font-size:14px;font-weight:400;color:#1d1d1f;letter-spacing:0.142px;">quant...</div>
<div class="t" style="left:600.73px;top:769.69px;font-size:14.6px;font-weight:400;color:#1d1d1f;">$680</div>
<div class="t" style="left:703.96px;top:769.69px;font-size:14.6px;font-weight:400;color:#1d1d1f;">$1,910</div>
<div class="a" style="left:298px;top:797px;width:225px;height:2px;background:#dadbe0"></div>
<div class="a" style="left:523px;top:793.6px;width:257px;height:1.4px;background:#e2e3e6"></div>
<div class="t" style="left:790.40px;top:310.50px;font-size:15px;font-weight:400;color:#1d1d1f;letter-spacing:0.962px;">SUM(quantity)</div>
<div class="a" style="left:790.2px;top:335.6px;width:151.4px;height:23.7px;background:linear-gradient(90deg,#e9f9ee 0%,#b4e8c4 30%,#86d59d 55%,#55c277 78%,#14a037 100%)"></div>
<div class="t" style="left:790.40px;top:365.97px;font-size:13.5px;font-weight:400;color:#1d1d1f;letter-spacing:-0.362px;">310</div>
<div class="t" style="left:842.20px;top:365.97px;font-size:13.5px;font-weight:400;color:#1d1d1f;letter-spacing:0.729px;">4,040</div>
<div class="t" style="left:908.90px;top:365.97px;font-size:13.5px;font-weight:400;color:#1d1d1f;letter-spacing:-0.771px;">7,770</div>
<div class="a" style="left:522.6px;top:891px;width:257.8px;height:9.4px;background:#f1f1f3"></div>
<div class="a" style="left:522.6px;top:891px;width:144.4px;height:9.4px;background:#9ca1a8;border-radius:5px"></div>
<div class="a" style="left:288px;top:910.7px;width:665px;height:39.3px;background:#f4f5f7"></div>
<div class="t" style="left:307.00px;top:923.00px;font-size:15px;font-weight:400;color:#1d1d1f;letter-spacing:0.163px;">Chart Data</div>
<svg style="left:0;top:0" width="1504" height="950"><rect x="870.9" y="931.2" width="12.4" height="5" rx="1.5" fill="none" stroke="#333" stroke-width="1.2"/><rect x="870.9" y="931" width="12.4" height="1.8" fill="#222"/><rect x="907.5" y="926.2" width="12.4" height="10" rx="1.5" fill="none" stroke="#333" stroke-width="1.2"/><rect x="907.5" y="926" width="12.4" height="2.2" fill="#222"/></svg>
<svg style="left:0;top:0" width="1504" height="950"><path d="M853.1 622 L853.1 632 L855.6 629.8 L857.4 635.9 L859.9 635 L858 629.4 L860.9 629.2 Z" fill="#000" stroke="#fff" stroke-width="0.8"/></svg>
<div class="a" style="left:953px;top:170px;width:262px;height:780px;background:#e9eaef"></div>
<div class="a" style="left:953px;top:170px;width:1px;height:780px;background:#e1e2e8"></div>
<div class="a" style="left:961.6px;top:178.6px;width:246px;height:135.6px;background:#fdfdfc;border:1px solid #dfe0e5"></div>
<div class="a" style="left:961.6px;top:325.8px;width:246px;height:135.59999999999997px;background:#fdfdfc;border:1px solid #dfe0e5"></div>
<div class="a" style="left:961.6px;top:473px;width:246px;height:135.29999999999995px;background:#fdfdfc;border:1px solid #dfe0e5"></div>
<div class="a" style="left:961.6px;top:619.5px;width:246px;height:88.70000000000005px;background:#fdfdfc;border:1px solid #dfe0e5"></div>
<div class="a" style="left:961.6px;top:719.3px;width:246px;height:128.0px;background:#fdfdfc;border:1px solid #dfe0e5"></div>
<div class="a" style="left:967px;top:219.4px;width:235.20000000000005px;height:27.099999999999994px;background:#dce5f5;border-radius:13px"></div>
<div class="a" style="left:967px;top:366.6px;width:235.20000000000005px;height:27.099999999999966px;background:#dce5f5;border-radius:13px"></div>
<div class="a" style="left:967.1px;top:513.6px;width:235.10000000000002px;height:26.799999999999955px;background:#dcf5e6;border-radius:13px"></div>
<div class="a" style="left:1000px;top:665.7px;width:201.79999999999995px;height:26.399999999999977px;background:#dcf5e6;border-radius:13px"></div>
<div class="t" style="left:969.60px;top:189.49px;font-size:14.3px;font-weight:400;color:#1d1d1f;-webkit-text-stroke:0.46px #1d1d1f;letter-spacing:0.706px;">Columns (X)</div>
<div class="t" style="left:975.30px;top:224.02px;font-size:14.5px;font-weight:400;color:#1d1d1f;-webkit-text-stroke:0.46px #1d1d1f;letter-spacing:0.801px;">shipping_region</div>
<div class="t" style="left:978.40px;top:260.58px;font-size:14.2px;font-weight:400;color:#6e7075;letter-spacing:0.031px;">Add fields here...</div>
<div class="t" style="left:969.60px;top:336.69px;font-size:14.3px;font-weight:400;color:#1d1d1f;-webkit-text-stroke:0.46px #1d1d1f;letter-spacing:0.174px;">Rows (Y)</div>
<div class="t" style="left:975.30px;top:371.22px;font-size:14.5px;font-weight:400;color:#1d1d1f;-webkit-text-stroke:0.46px #1d1d1f;letter-spacing:0.837px;">account_manager</div>
<div class="t" style="left:978.40px;top:407.78px;font-size:14.2px;font-weight:400;color:#6e7075;letter-spacing:0.031px;">Add fields here...</div>
<div class="t" style="left:969.70px;top:483.89px;font-size:14.3px;font-weight:400;color:#1d1d1f;-webkit-text-stroke:0.46px #1d1d1f;letter-spacing:0.673px;">Measure Values</div>
<div class="t" style="left:975.40px;top:518.62px;font-size:14.5px;font-weight:400;color:#1d1d1f;-webkit-text-stroke:0.46px #1d1d1f;letter-spacing:0.828px;">SUM(quantity)</div>
<div class="t" style="left:978.30px;top:554.38px;font-size:14.2px;font-weight:400;color:#6e7075;letter-spacing:0.031px;">Add fields here...</div>
<div class="t" style="left:972.00px;top:630.69px;font-size:14.3px;font-weight:400;color:#1d1d1f;-webkit-text-stroke:0.46px #1d1d1f;letter-spacing:1.034px;">Color</div>
<div class="t" style="left:1098.10px;top:631.79px;font-size:13px;font-weight:400;color:#9a9ca1;-webkit-text-stroke:0.42px #9a9ca1;letter-spacing:0.042px;">Add all</div>
<div class="t" style="left:1158.10px;top:631.79px;font-size:13px;font-weight:400;color:#5a8ae0;-webkit-text-stroke:0.42px #5a8ae0;letter-spacing:-0.016px;">Clear</div>
<div class="a" style="left:1147.8px;top:631.6px;width:1px;height:14px;background:#c8c9ce"></div>
<div class="t" style="left:1008.20px;top:670.32px;font-size:14.5px;font-weight:400;color:#1d1d1f;-webkit-text-stroke:0.46px #1d1d1f;letter-spacing:0.561px;">Measure Values</div>
<div class="t" style="left:969.70px;top:730.09px;font-size:14.3px;font-weight:400;color:#1d1d1f;-webkit-text-stroke:0.46px #1d1d1f;letter-spacing:0.630px;">Filters</div>
<div class="t" style="left:977.70px;top:768.58px;font-size:14.2px;font-weight:400;color:#6e7075;letter-spacing:0.078px;">Add fields here...</div>
<div class="t" style="left:994.60px;top:865.70px;font-size:15px;font-weight:400;color:#1d1d1f;-webkit-text-stroke:0.27px #1d1d1f;letter-spacing:0.217px;">Convert to Visual Explorer</div>
<div class="t" style="left:989.70px;top:920.00px;font-size:15px;font-weight:400;color:#1d1d1f;letter-spacing:0.434px;">Update mode:</div>
<div class="t" style="left:1101.30px;top:920.00px;font-size:15px;font-weight:400;color:#1d1d1f;letter-spacing:0.613px;">Automatic</div>
<svg style="left:0;top:0" width="1504" height="950"><path d="M1181.8 231.6 L1186.6 237.0 L1191.3999999999999 231.6" fill="none" stroke="#2c3f8c" stroke-width="1.6"/><path d="M1181.8 378.8 L1186.6 384.2 L1191.3999999999999 378.8" fill="none" stroke="#2c3f8c" stroke-width="1.6"/><path d="M1181.8 525.8 L1186.6 531.1999999999999 L1191.3999999999999 525.8" fill="none" stroke="#333" stroke-width="1.5"/><path d="M1181.8 677.8 L1186.6 683.1999999999999 L1191.3999999999999 677.8" fill="none" stroke="#333" stroke-width="1.5"/><path d="M1178.2 926 L1182.9 931 L1187.6000000000001 926" fill="none" stroke="#222" stroke-width="1.4"/><path d="M1163.2 484.4 V496.2 M1166.9 484.4 V496.2 M1170.6 484.4 V496.2" stroke="#333" stroke-width="1.9"/><path d="M1186.6 485.6 H1198 M1186.6 490.1 H1198 M1186.6 494.6 H1198" stroke="#4a7bdc" stroke-width="1.7"/><rect x="967.9" y="665.8" width="25" height="25.8" rx="7" fill="#fdfdfc" stroke="#dcdde2" stroke-width="1"/><rect x="971.6" y="673" width="5.2" height="12.5" rx="1" fill="#2b5ed6"/><rect x="977.6" y="673" width="5.4" height="12.5" fill="#dfb23c"/><rect x="983.6" y="673" width="5.4" height="12.5" rx="1" fill="#e9767b"/></svg>
<div class="a" style="left:1214.5px;top:170px;width:289.5px;height:780px;background:#fdfdfc;border-left:1px solid #dcdde3;border-bottom-right-radius:10px"></div>
<div class="t" style="left:1287.60px;top:191.52px;font-size:14.5px;font-weight:400;color:#1d1d1f;-webkit-text-stroke:0.46px #1d1d1f;letter-spacing:0.424px;">Fields</div>
<div class="t" style="left:1387.00px;top:191.52px;font-size:14.5px;font-weight:400;color:#4d5056;-webkit-text-stroke:0.26px #4d5056;letter-spacing:0.696px;">Format</div>
<div class="a" style="left:1215px;top:228px;width:289px;height:1px;background:#e3e4e9"></div>
<div class="a" style="left:1257.7px;top:225.3px;width:99.9px;height:3px;background:#2158d6"></div>
<div class="a" style="left:1225.6px;top:239.8px;width:228.1px;height:29px;border:1px solid #d9dadf;border-radius:14px"></div>
<div class="a" style="left:1464.4px;top:239.8px;width:29.2px;height:29px;border:1px solid #d9dadf;border-radius:10px"></div>
<div class="t" style="left:1236.50px;top:246.90px;font-size:15px;font-weight:400;color:#5f6267;letter-spacing:0.219px;">Search fields...</div>
<div class="t" style="left:1225.60px;top:289.69px;font-size:14.3px;font-weight:400;color:#1d1d1f;letter-spacing:-0.077px;">Dimensions</div>
<div class="t" style="left:1225.70px;top:631.39px;font-size:14.3px;font-weight:400;color:#1d1d1f;letter-spacing:-0.353px;">Measures</div>
<div class="a" style="left:1215px;top:609.6px;width:289px;height:1.2px;background:#dfe0e5"></div>
<div class="t" style="left:1263.00px;top:321.49px;font-size:14.3px;font-weight:400;color:#1d1d1f;letter-spacing:0.061px;">account_id</div>
<div class="t" style="left:1263.00px;top:348.93px;font-size:14.3px;font-weight:400;color:#1d1d1f;letter-spacing:-0.032px;">account_manager</div>
<div class="t" style="left:1263.00px;top:376.37px;font-size:14.3px;font-weight:400;color:#1d1d1f;letter-spacing:-0.053px;">account_name</div>
<div class="t" style="left:1263.00px;top:403.81px;font-size:14.3px;font-weight:400;color:#1d1d1f;letter-spacing:-0.025px;">cancelled_at</div>
<div class="t" style="left:1263.00px;top:431.25px;font-size:14.3px;font-weight:400;color:#1d1d1f;letter-spacing:-0.151px;">order_id</div>
<div class="t" style="left:1263.00px;top:458.69px;font-size:14.3px;font-weight:400;color:#1d1d1f;">payment_cycle</div>
<div class="t" style="left:1263.00px;top:486.13px;font-size:14.3px;font-weight:400;color:#1d1d1f;letter-spacing:0.182px;">product_id</div>
<div class="t" style="left:1263.00px;top:513.57px;font-size:14.3px;font-weight:400;color:#1d1d1f;letter-spacing:0.073px;">product_name</div>
<div class="t" style="left:1263.00px;top:541.01px;font-size:14.3px;font-weight:400;color:#1d1d1f;letter-spacing:-0.140px;">purchased_at</div>
<div class="t" style="left:1263.00px;top:568.45px;font-size:14.3px;font-weight:400;color:#1d1d1f;letter-spacing:-0.082px;">returned_at</div>
<div class="t" style="left:1263.00px;top:595.89px;font-size:14.3px;font-weight:400;color:#1d1d1f;letter-spacing:0.037px;">review</div>
<div class="t" style="left:1263.20px;top:662.69px;font-size:14.3px;font-weight:400;color:#1d1d1f;letter-spacing:-0.384px;">business_size</div>
<div class="t" style="left:1263.20px;top:690.13px;font-size:14.3px;font-weight:400;color:#1d1d1f;letter-spacing:-0.383px;">days_to_close</div>
<div class="t" style="left:1263.20px;top:717.57px;font-size:14.3px;font-weight:400;color:#1d1d1f;letter-spacing:-0.432px;">days_to_ship</div>
<div class="t" style="left:1263.20px;top:745.01px;font-size:14.3px;font-weight:400;color:#1d1d1f;letter-spacing:0.279px;">discount</div>
<div class="t" style="left:1263.20px;top:772.45px;font-size:14.3px;font-weight:400;color:#1d1d1f;letter-spacing:-0.020px;">index</div>
<div class="t" style="left:1263.20px;top:799.89px;font-size:14.3px;font-weight:400;color:#1d1d1f;letter-spacing:0.303px;">price</div>
<div class="t" style="left:1263.20px;top:827.33px;font-size:14.3px;font-weight:400;color:#1d1d1f;letter-spacing:0.289px;">quantity</div>
<div class="t" style="left:1263.20px;top:854.77px;font-size:14.3px;font-weight:400;color:#1d1d1f;letter-spacing:0.107px;">rating</div>
<div class="t" style="left:1263.20px;top:882.21px;font-size:14.3px;font-weight:400;color:#1d1d1f;letter-spacing:0.023px;">shipping_cost</div>
<div class="t" style="left:1263.20px;top:909.65px;font-size:14.3px;font-weight:400;color:#1d1d1f;letter-spacing:0.137px;">shipping_latitude</div>
<div class="t" style="left:1263.20px;top:937.09px;font-size:14.3px;font-weight:400;color:#1d1d1f;letter-spacing:0.174px;">shipping_longitude</div>
<svg style="left:0;top:0" width="1504" height="950"><circle cx="1440" cy="253.2" r="6.6" fill="none" stroke="#333" stroke-width="1.3"/><path d="M1444.8 258 L1449.6 262.6" stroke="#333" stroke-width="1.8" stroke-linecap="round"/><text x="1469.5" y="262" font-family="Liberation Serif" font-style="italic" font-size="15" fill="#444">f</text><text x="1474.5" y="263.5" font-family="Liberation Serif" font-style="italic" font-size="8" fill="#444">x</text><path d="M1485.5 246.5 V253.8 M1481.8 250.2 H1489.2" stroke="#2158d6" stroke-width="1.8"/><path d="M1243.4 322.0 V324.4 M1243.4 322.0 H1254.2 V324.4 M1248.8 322.0 V332.0 M1246.2 332.0 H1251.4" fill="none" stroke="#2a63d8" stroke-width="1.5"/><path d="M1243.4 349.4 V351.8 M1243.4 349.4 H1254.2 V351.8 M1248.8 349.4 V359.4 M1246.2 359.4 H1251.4" fill="none" stroke="#2a63d8" stroke-width="1.5"/><path d="M1243.4 376.9 V379.3 M1243.4 376.9 H1254.2 V379.3 M1248.8 376.9 V386.9 M1246.2 386.9 H1251.4" fill="none" stroke="#2a63d8" stroke-width="1.5"/><rect x="1243.2" y="404.9" width="11.4" height="10.2" rx="2.2" fill="none" stroke="#2a63d8" stroke-width="1.2"/><path d="M1243.2 407.7 H1254.6 M1245.9 403.5 V405.7 M1251.9 403.5 V405.7" stroke="#2a63d8" stroke-width="1.2"/><g fill="#2a63d8"><rect x="1246" y="409.7" width="1.2" height="1.2"/><rect x="1248.4" y="409.7" width="1.2" height="1.2"/><rect x="1250.8" y="409.7" width="1.2" height="1.2"/><rect x="1246" y="412.1" width="1.2" height="1.2"/><rect x="1248.4" y="412.1" width="1.2" height="1.2"/><rect x="1250.8" y="412.1" width="1.2" height="1.2"/></g><path d="M1243.4 431.8 V434.2 M1243.4 431.8 H1254.2 V434.2 M1248.8 431.8 V441.8 M1246.2 441.8 H1251.4" fill="none" stroke="#2a63d8" stroke-width="1.5"/><path d="M1243.4 459.2 V461.6 M1243.4 459.2 H1254.2 V461.6 M1248.8 459.2 V469.2 M1246.2 469.2 H1251.4" fill="none" stroke="#2a63d8" stroke-width="1.5"/><path d="M1243.4 486.6 V489.0 M1243.4 486.6 H1254.2 V489.0 M1248.8 486.6 V496.6 M1246.2 496.6 H1251.4" fill="none" stroke="#2a63d8" stroke-width="1.5"/><path d="M1243.4 514.1 V516.5 M1243.4 514.1 H1254.2 V516.5 M1248.8 514.1 V524.1 M1246.2 524.1 H1251.4" fill="none" stroke="#2a63d8" stroke-width="1.5"/><rect x="1243.2" y="542.1" width="11.4" height="10.2" rx="2.2" fill="none" stroke="#2a63d8" stroke-width="1.2"/><path d="M1243.2 544.9 H1254.6 M1245.9 540.7 V542.9 M1251.9 540.7 V542.9" stroke="#2a63d8" stroke-width="1.2"/><g fill="#2a63d8"><rect x="1246" y="546.9" width="1.2" height="1.2"/><rect x="1248.4" y="546.9" width="1.2" height="1.2"/><rect x="1250.8" y="546.9" width="1.2" height="1.2"/><rect x="1246" y="549.3" width="1.2" height="1.2"/><rect x="1248.4" y="549.3" width="1.2" height="1.2"/><rect x="1250.8" y="549.3" width="1.2" height="1.2"/></g><path d="M1243.4 569.0 V571.4 M1243.4 569.0 H1254.2 V571.4 M1248.8 569.0 V579.0 M1246.2 579.0 H1251.4" fill="none" stroke="#2a63d8" stroke-width="1.5"/><path d="M1243.4 596.4 V598.8 M1243.4 596.4 H1254.2 V598.8 M1248.8 596.4 V606.4 M1246.2 606.4 H1251.4" fill="none" stroke="#2a63d8" stroke-width="1.5"/><path d="M1245.4 663.0 V674.3 M1250.2 663.0 V674.3 M1241.6 666.4 H1254 M1241.6 670.9 H1254" stroke="#2fae62" stroke-width="1.4"/><path d="M1245.4 690.4 V701.7 M1250.2 690.4 V701.7 M1241.6 693.8 H1254 M1241.6 698.3 H1254" stroke="#2fae62" stroke-width="1.4"/><path d="M1245.4 717.9 V729.2 M1250.2 717.9 V729.2 M1241.6 721.3 H1254 M1241.6 725.8 H1254" stroke="#2fae62" stroke-width="1.4"/><path d="M1245.4 745.3 V756.6 M1250.2 745.3 V756.6 M1241.6 748.7 H1254 M1241.6 753.2 H1254" stroke="#2fae62" stroke-width="1.4"/><path d="M1245.4 772.8 V784.1 M1250.2 772.8 V784.1 M1241.6 776.2 H1254 M1241.6 780.7 H1254" stroke="#2fae62" stroke-width="1.4"/><path d="M1245.4 800.2 V811.5 M1250.2 800.2 V811.5 M1241.6 803.6 H1254 M1241.6 808.1 H1254" stroke="#2fae62" stroke-width="1.4"/><path d="M1245.4 827.6 V838.9 M1250.2 827.6 V838.9 M1241.6 831.0 H1254 M1241.6 835.5 H1254" stroke="#2fae62" stroke-width="1.4"/><path d="M1245.4 855.1 V866.4 M1250.2 855.1 V866.4 M1241.6 858.5 H1254 M1241.6 863.0 H1254" stroke="#2fae62" stroke-width="1.4"/><path d="M1245.4 882.5 V893.8 M1250.2 882.5 V893.8 M1241.6 885.9 H1254 M1241.6 890.4 H1254" stroke="#2fae62" stroke-width="1.4"/><path d="M1245.4 910.0 V921.3 M1250.2 910.0 V921.3 M1241.6 913.4 H1254 M1241.6 917.9 H1254" stroke="#2fae62" stroke-width="1.4"/><path d="M1245.4 937.4 V948.7 M1250.2 937.4 V948.7 M1241.6 940.8 H1254 M1241.6 945.3 H1254" stroke="#2fae62" stroke-width="1.4"/></svg>
<div class="a" style="left:1419.5px;top:865.4px;width:59.6px;height:59.6px;border-radius:50%;background:#020203;box-shadow:0 2px 14px rgba(0,0,0,0.18)"></div>
<svg style="left:0;top:0" width="1504" height="950"><path d="M1439 880 H1460.5 Q1463.2 880 1463.2 882.7 V910.3 L1455.5 907.2 H1439 Q1436.2 907.2 1436.2 904.4 V882.7 Q1436.2 880 1439 880 Z" fill="#fff"/>
<path d="M1440.6 898.8 Q1449.5 905.5 1458.4 898.8" fill="none" stroke="#111" stroke-width="1.2"/></svg>
<div class="a" style="left:0;top:57px;width:1504px;height:1px;background:#07090d"></div>
<div class="a" style="left:0;top:0;width:1.2px;height:57px;background:#444954"></div></body></html>
